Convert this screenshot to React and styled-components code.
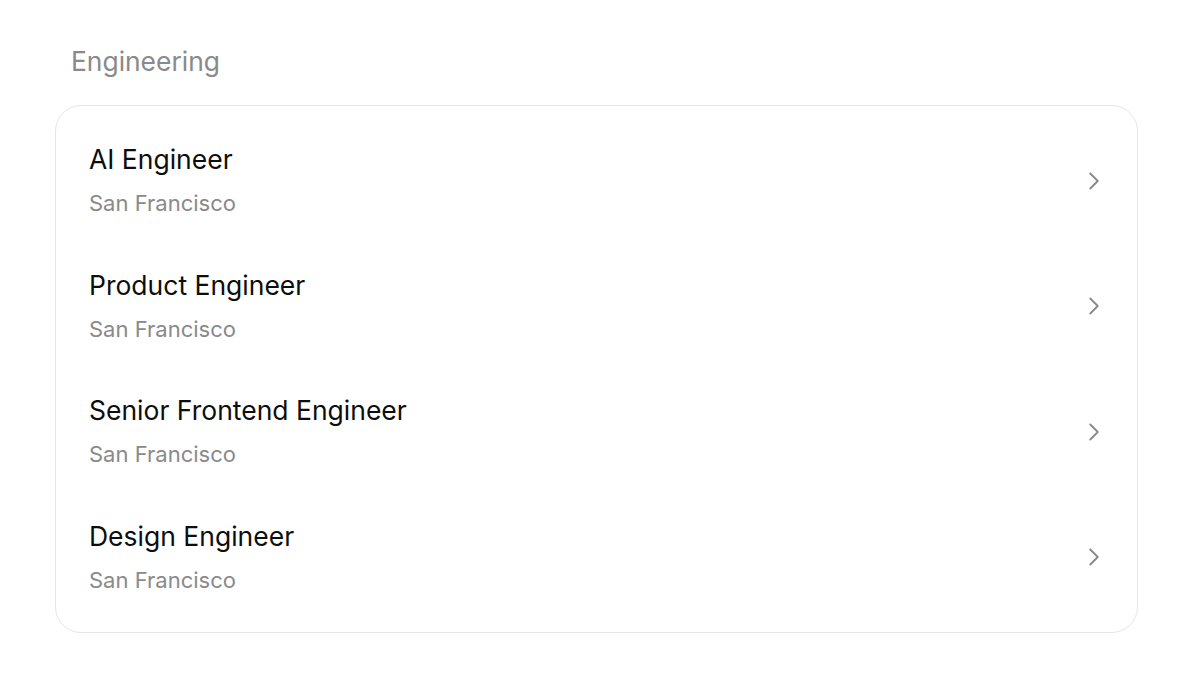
import styled, { createGlobalStyle } from "styled-components";
import { ChevronRight } from "lucide-react";

const GlobalStyle = createGlobalStyle`
  body {
    margin: 0;
    background: #ffffff;
    font-family: Inter, "Noto Sans", sans-serif;
  }
`;

const Page = styled.div`
  padding: 43px 62px 0 55px;
`;

const SectionTitle = styled.h2`
  margin: 0 0 26px 16px;
  font-size: 26.4px;
  font-weight: 400;
  line-height: 36px;
  color: #8a8a8a;
`;

const Card = styled.div`
  border: 1px solid #e6e6e6;
  border-radius: 26px;
  padding: 12px 0;
  background: #fff;
`;

const Row = styled.div`
  height: 125.5px;
  display: flex;
  align-items: center;
  justify-content: space-between;
  padding: 0 28px 0 33px;
  cursor: pointer;
`;

const TextBlock = styled.div`
  display: flex;
  flex-direction: column;
  gap: 15px;
  padding-bottom: 2px;
`;

const Title = styled.div`
  font-size: 26.5px;
  line-height: 32px;
  color: #0d0d0d;
`;

const Subtitle = styled.div`
  font-size: 22px;
  line-height: 26px;
  color: #8a8a8a;
`;

const jobs = [
  { title: "AI Engineer", location: "San Francisco" },
  { title: "Product Engineer", location: "San Francisco" },
  { title: "Senior Frontend Engineer", location: "San Francisco" },
  { title: "Design Engineer", location: "San Francisco" },
];

export default function App() {
  return (
    <>
      <GlobalStyle />
      <Page>
        <SectionTitle>Engineering</SectionTitle>
        <Card>
          {jobs.map((job) => (
            <Row key={job.title}>
              <TextBlock>
                <Title>{job.title}</Title>
                <Subtitle>{job.location}</Subtitle>
              </TextBlock>
              <ChevronRight size={30} strokeWidth={1.5} color="#8a8a8a" />
            </Row>
          ))}
        </Card>
      </Page>
    </>
  );
}
